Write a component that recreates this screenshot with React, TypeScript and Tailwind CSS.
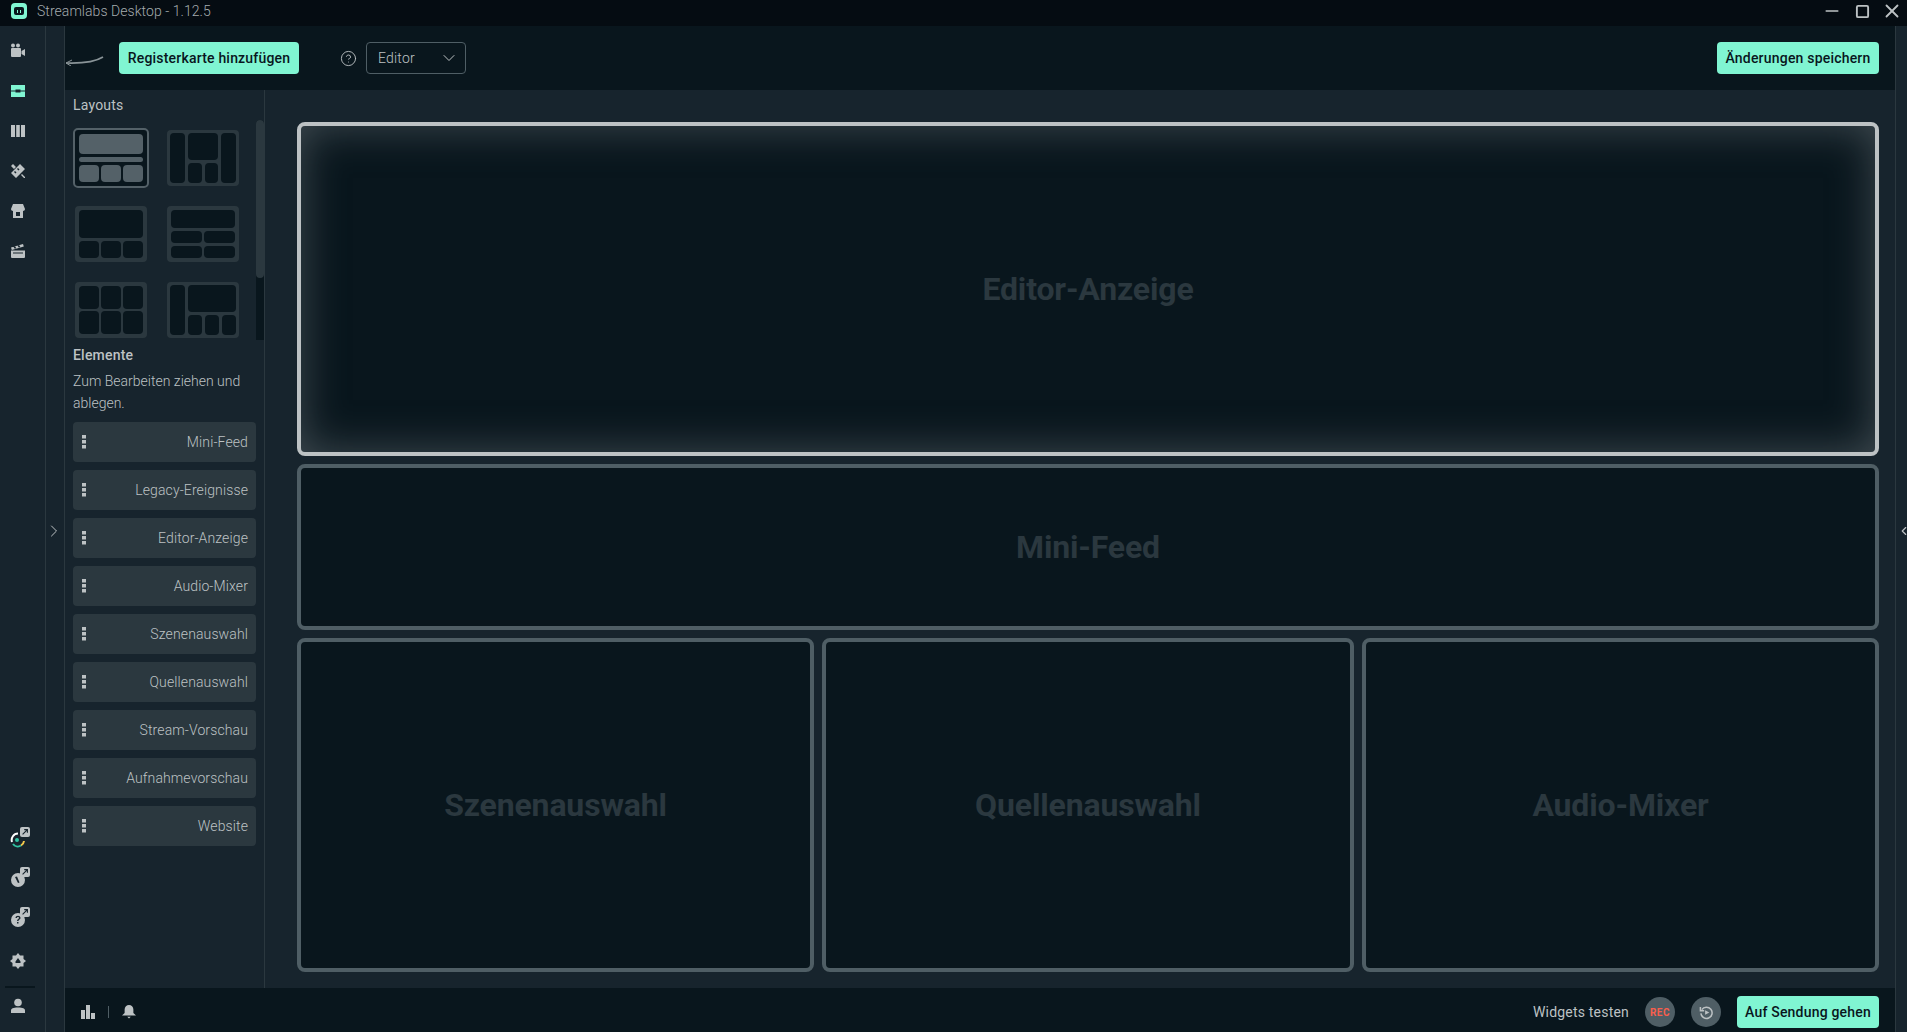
import React from 'react';
import { ChevronDown, ChevronLeft, ChevronRight, CircleHelp, Minus, Square, X } from 'lucide-react';

const elements = [
  'Mini-Feed',
  'Legacy-Ereignisse',
  'Editor-Anzeige',
  'Audio-Mixer',
  'Szenenauswahl',
  'Quellenauswahl',
  'Stream-Vorschau',
  'Aufnahmevorschau',
  'Website',
];

const Cell: React.FC<{ className: string; light?: boolean }> = ({ className, light }) => (
  <div className={`rounded-[4px] ${light ? 'bg-[#546168]' : 'bg-[#09161d]'} ${className}`} />
);

const ThumbClassic: React.FC = () => (
  <div className="flex h-[60px] w-[76px] flex-col gap-[3px] rounded-[5px] border-2 border-[#546168] bg-[#09161d] p-1">
    <Cell light className="h-5 w-full" />
    <Cell light className="h-[5px] w-full" />
    <div className="flex flex-1 gap-[2px]">
      <Cell light className="flex-1" />
      <Cell light className="flex-1" />
      <Cell light className="flex-1" />
    </div>
  </div>
);

const Thumb: React.FC<{ children: React.ReactNode; className?: string }> = ({ children, className = '' }) => (
  <div className={`h-14 w-[72px] rounded-[4px] bg-[#2b383f] ${className}`}>{children}</div>
);

const LayoutGrid: React.FC = () => (
  <div className="grid w-[166px] grid-cols-[94px_72px] items-center">
    <div className="flex h-[76px] items-start"><ThumbClassic /></div>
    <div className="flex h-[76px] items-start pt-[2px]">
      <Thumb className="flex gap-[3px] p-[3px]">
        <Cell className="w-[15px]" />
        <div className="flex flex-1 flex-col gap-[3px]">
          <Cell className="h-[27px] w-full" />
          <div className="flex flex-1 gap-[3px]">
            <Cell className="flex-1" />
            <Cell className="flex-1" />
          </div>
        </div>
        <Cell className="w-[15px]" />
      </Thumb>
    </div>
    <div className="flex h-[76px] items-start pl-[2px] pt-[2px]">
      <Thumb className="flex flex-col gap-[3px] p-1">
        <Cell className="h-7 w-full" />
        <div className="flex flex-1 gap-[2px]">
          <Cell className="flex-1" />
          <Cell className="flex-1" />
          <Cell className="flex-1" />
        </div>
      </Thumb>
    </div>
    <div className="flex h-[76px] items-start pt-[2px]">
      <Thumb className="flex flex-col gap-[3px] p-1">
        <Cell className="h-[18px] w-full" />
        <div className="flex flex-1 gap-[2px]">
          <Cell className="flex-1" />
          <Cell className="flex-1" />
        </div>
        <div className="flex flex-1 gap-[2px]">
          <Cell className="flex-1" />
          <Cell className="flex-1" />
        </div>
      </Thumb>
    </div>
    <div className="flex h-[76px] items-start pl-[2px] pt-[2px]">
      <Thumb className="grid grid-cols-3 grid-rows-2 gap-[2px] p-1">
        <Cell className="" />
        <Cell className="" />
        <Cell className="" />
        <Cell className="" />
        <Cell className="" />
        <Cell className="" />
      </Thumb>
    </div>
    <div className="flex h-[76px] items-start pt-[2px]">
      <Thumb className="flex gap-[3px] p-[3px]">
        <Cell className="w-[15px]" />
        <div className="flex flex-1 flex-col gap-[3px]">
          <Cell className="h-[27px] w-full" />
          <div className="flex flex-1 gap-[3px]">
            <Cell className="flex-1" />
            <Cell className="flex-1" />
            <Cell className="flex-1" />
          </div>
        </div>
      </Thumb>
    </div>
  </div>
);

const Panel: React.FC<{ title: string; className?: string; active?: boolean }> = ({ title, className = '', active }) => (
  <div
    className={`flex items-center justify-center rounded-[8px] border-4 bg-[#09161d] ${
      active
        ? 'border-[#bdc2c4] shadow-[inset_0_0_44px_rgba(120,130,135,0.5)]'
        : 'border-[#4f5e65]'
    } ${className}`}
  >
    <span className="text-[32px] font-bold tracking-[-0.15px] text-[#2b383f]">{title}</span>
  </div>
);

const MintButton: React.FC<{ children: React.ReactNode; className?: string }> = ({ children, className = '' }) => (
  <button type="button" className={`flex h-8 items-center justify-center rounded-[4px] bg-[#80f5d2] text-sm font-medium text-[#09161d] ${className}`}>
    {children}
  </button>
);

const IconBox: React.FC<{ children: React.ReactNode; active?: boolean }> = ({ children, active }) => (
  <svg viewBox="0 0 16 16" className={`h-4 w-4 ${active ? 'fill-[#80f5d2]' : 'fill-[#bdc2c4]'}`}>{children}</svg>
);

const ExternalBadge: React.FC = () => (
  <span className="absolute -right-[4px] -top-[5px] flex h-[10px] w-[10px] items-center justify-center rounded-[2px] bg-[#bdc2c4]">
    <svg viewBox="0 0 10 10" className="h-2 w-2 fill-none stroke-[#17242d] stroke-[1.4]">
      <path d="M2 8 8 2M4 2h4v4" />
    </svg>
  </span>
);

const NavRail: React.FC = () => (
  <nav className="flex w-[46px] shrink-0 flex-col border-r border-[#2b383f] bg-[#17242d]">
    <div className="flex flex-col gap-6 pl-[10px] pt-[17px]">
      <IconBox>
        <circle cx="3" cy="2.5" r="2" />
        <circle cx="8" cy="2.5" r="2" />
        <rect x="1" y="5" width="10" height="9" rx="1" />
        <path d="M11.5 8 15 6v7l-3.500-2z" />
      </IconBox>
      <IconBox active>
        <path d="M1 2h14v5.500h-4.500v-1h-5v1H1zM1 8.500h4.500v1h5v-1H15V14H1z" />
      </IconBox>
      <IconBox>
        <rect x="1" y="2" width="4" height="12" />
        <rect x="6.200" y="2" width="3.600" height="12" />
        <rect x="11" y="2" width="4" height="12" />
      </IconBox>
      <IconBox>
        <path d="M1 10 10 1l5 5-9 9zM5 8 4 9l1.500 1.500 1-1zM8 5 7 6l1.500 1.500 1-1z" fillRule="evenodd" />
        <path d="M1 3l2-2 3 3-2 2zM11 12l1-1 3 3v1h-1z" />
      </IconBox>
      <IconBox>
        <path d="M3 1h10l2 5c0 1-1 2-2 2v7H3V8C2 8 1 7 1 6zM6 9v4h4V9z" fillRule="evenodd" />
      </IconBox>
      <IconBox>
        <path d="m1 4.500 12-3.500.8 2.500-12 3.500zM3.500 3.800l1.200 2 1.600-.5-1.200-2zM7.500 2.600l1.200 2 1.600-.5-1.200-2zM1 7.500h14V14a1 1 0 0 1-1 1H2a1 1 0 0 1-1-1zM3 9.500v1h10v-1z" fillRule="evenodd" />
      </IconBox>
    </div>
    <div className="mt-auto flex flex-col pl-[10px]">
      <span className="relative block h-4 w-4">
        <svg viewBox="0 0 16 16" className="h-4 w-4 fill-none stroke-[2]">
          <path d="M2 10A6.500 6.500 0 0 1 8 1.500" stroke="#ffffff" />
          <path d="M14 9a6 6 0 0 1-3 4.500" stroke="#f2c94c" />
          <path d="M11 13.500A6 6 0 0 1 3 12" stroke="#31c3a2" />
          <circle cx="7" cy="8" r="2" fill="#31c3a2" stroke="none" />
        </svg>
        <ExternalBadge />
      </span>
      <span className="relative mt-6 block h-4 w-4">
        <IconBox>
          <path d="M8 1a7 7 0 1 1 0 14A7 7 0 0 1 8 1zM5 5l3 6 1.500-.5L7 4.500z" fillRule="evenodd" />
        </IconBox>
        <ExternalBadge />
      </span>
      <span className="relative mt-6 block h-4 w-4">
        <IconBox>
          <path d="M8 1a7 7 0 1 1 0 14A7 7 0 0 1 8 1zM5.500 6h1.500c0-1.300 2-1.300 2 0 0 1-2 1-2 3h1.500c0-1.500 2-1.500 2-3 0-3-5-3-5 0zM7 10v1.500h1.500V10z" fillRule="evenodd" />
        </IconBox>
        <ExternalBadge />
      </span>
      <span className="mt-[25px] block h-4 w-4">
        <IconBox>
          <path d="M8 0l2 2.500h3.500V6L16 8l-2.500 2v3.500H10L8 16l-2-2.500H2.500V10L0 8l2.500-2V2.500H6zM8 5 5.500 8.500V10h5V8.500z" fillRule="evenodd" />
        </IconBox>
      </span>
      <div className="-ml-[5px] mt-[17px] h-[2px] w-[30px] bg-[#09161d]" />
      <span className="mb-[18px] mt-[10px] block h-4 w-4">
        <IconBox>
          <circle cx="8" cy="4.500" r="3.800" />
          <path d="M1 15v-2.500C1 10.500 3 9.500 8 9.500s7 1 7 3V15z" />
        </IconBox>
      </span>
    </div>
  </nav>
);

export default function App() {
  return (
    <div className="flex h-[1032px] w-[1907px] flex-col overflow-hidden bg-[#17242d] font-['Roboto',sans-serif] tracking-[0.2px] text-[#bdc2c4]">
      <header className="flex h-[26px] shrink-0 items-center bg-[#050c12] pb-[4px] pl-[11px]">
        <span className="flex h-4 w-4 items-center justify-center rounded-[4px] bg-[#80f5d2]">
          <span className="relative block h-[8px] w-[10px] rounded-[2px] bg-[#09161d]">
            <span className="absolute left-[3px] top-[3px] h-[3px] w-[1px] bg-[#80f5d2]" />
            <span className="absolute left-[6px] top-[3px] h-[3px] w-[1px] bg-[#80f5d2]" />
          </span>
        </span>
        <span className="ml-[10px] text-sm font-light tracking-[0.05px] text-[#a4abae]">Streamlabs Desktop - 1.12.5</span>
        <div className="ml-auto flex items-center">
          <span className="flex w-[30px] justify-center"><Minus className="h-5 w-5 text-[#bdc2c4]" strokeWidth={1.8} /></span>
          <span className="flex w-[30px] justify-center"><Square className="h-[15px] w-[15px] text-[#bdc2c4]" strokeWidth={3} /></span>
          <span className="flex w-[30px] justify-center"><X className="h-[22px] w-[22px] text-[#bdc2c4]" strokeWidth={2} /></span>
        </div>
      </header>

      <div className="flex min-h-0 flex-1">
        <NavRail />

        <div className="flex w-[19px] shrink-0 items-center border-r border-[#2b383f] pt-[4px]">
          <ChevronRight className="-ml-[2px] h-6 w-6 text-[#bdc2c4]" strokeWidth={1.2} />
        </div>

        <div className="flex min-w-0 flex-1 flex-col">
          <div className="flex h-16 shrink-0 items-center bg-[#09161d] pr-4">
            <svg viewBox="0 0 40 12" className="mt-1 h-3 w-10 shrink-0 fill-none stroke-[#8a9498]">
              <path d="M38 3C30 8 16 9.500 1 9" strokeWidth="1.600" />
              <path d="M7 6 1 9l5 3" strokeWidth="1" />
            </svg>
            <MintButton className="ml-[14px] w-[180px]">Registerkarte hinzufügen</MintButton>
            <CircleHelp className="ml-[41px] h-[17px] w-[17px] text-[#bdc2c4]" strokeWidth={1.3} />
            <button type="button" className="ml-[9px] flex h-8 w-[100px] items-center justify-between rounded-[4px] border border-[#4f5e65] pl-[11px] pr-[6px] text-sm font-light">
              Editor
              <ChevronDown className="h-5 w-5" strokeWidth={1.2} />
            </button>
            <MintButton className="ml-auto w-[162px]">Änderungen speichern</MintButton>
          </div>

          <div className="flex min-h-0 flex-1">
            <aside className="flex w-[200px] shrink-0 flex-col border-r border-[#2b383f] pl-2">
              <h2 className="mt-[6px] h-[18px] text-sm leading-[18px]">Layouts</h2>
              <div className="relative mt-[14px] h-[218px]">
                <LayoutGrid />
                <div className="absolute left-[183px] top-[-8px] h-[220px] w-2 rounded-t-full bg-[#09161d]">
                  <div className="h-[158px] rounded-full bg-[#2b383f]" />
                </div>
              </div>
              <h2 className="h-[18px] text-sm font-medium leading-[18px]">Elemente</h2>
              <p className="mt-[6px] w-[175px] text-sm font-light leading-[22px] tracking-normal">Zum Bearbeiten ziehen und ablegen.</p>
              <ul className="mt-[8px] flex w-[183px] flex-col gap-2">
                {elements.map((name) => (
                  <li key={name} className="flex h-10 items-center justify-between rounded-[4px] bg-[#2b383f] pl-[9px] pr-2 text-sm font-light tracking-[0.12px]">
                    <svg viewBox="0 0 4 14" className="h-[14px] w-1 fill-[#bdc2c4]">
                      <rect y="0" width="4" height="3.500" />
                      <rect y="5" width="4" height="3.500" />
                      <rect y="10" width="4" height="3.500" />
                    </svg>
                    {name}
                  </li>
                ))}
              </ul>
            </aside>

            <main className="flex min-w-0 flex-1 flex-col gap-2 pb-4 pl-8 pr-4 pt-8">
              <Panel active title="Editor-Anzeige" className="h-[334px] shrink-0" />
              <Panel title="Mini-Feed" className="h-[166px] shrink-0" />
              <div className="flex min-h-0 flex-1 gap-2">
                <Panel title="Szenenauswahl" className="w-[517px]" />
                <Panel title="Quellenauswahl" className="w-[532px]" />
                <Panel title="Audio-Mixer" className="flex-1" />
              </div>
            </main>
          </div>

          <footer className="flex h-[44px] shrink-0 items-center bg-[#09161d] pl-4 pr-4 pt-1">
            <svg viewBox="0 0 14 14" className="h-[14px] w-[14px] fill-[#bdc2c4]">
              <rect x="0" y="5" width="4" height="9" />
              <rect x="5" y="0" width="4" height="14" />
              <rect x="10" y="8" width="4" height="6" />
            </svg>
            <div className="ml-[13px] h-3 w-px bg-[#4f5e65]" />
            <svg viewBox="0 0 16 16" className="ml-[13px] h-4 w-[14px] fill-[#bdc2c4]">
              <path d="M8 0a5 5 0 0 1 5 5v4l3 3H0l3-3V5a5 5 0 0 1 5-5zM6 13.500h4L8 15.500z" />
            </svg>
            <span className="ml-auto text-sm">Widgets testen</span>
            <span className="ml-4 flex h-[30px] w-[30px] items-center justify-center rounded-full bg-[#4f5e65] text-[10px] font-bold tracking-[0.5px] text-[#f85e4d]">REC</span>
            <span className="ml-4 flex h-[30px] w-[30px] items-center justify-center rounded-full bg-[#4f5e65]">
              <svg viewBox="0 0 16 16" className="h-[15px] w-[15px] fill-none stroke-[#bdc2c4] stroke-[1.600]">
                <path d="M3 5a6 6 0 1 1-1 4" />
                <path d="M1.500 2v4h4" />
                <path d="M6.500 5.500 11 8l-4.500 2.500z" fill="#bdc2c4" stroke="none" />
              </svg>
            </span>
            <MintButton className="ml-4 w-[142px]">Auf Sendung gehen</MintButton>
          </footer>
        </div>

        <div className="relative w-3 shrink-0 border-l border-[#2b383f]">
          <ChevronLeft className="absolute left-[1px] top-[498px] h-[14px] w-[14px] text-[#bdc2c4]" strokeWidth={2} />
        </div>
      </div>
    </div>
  );
}
